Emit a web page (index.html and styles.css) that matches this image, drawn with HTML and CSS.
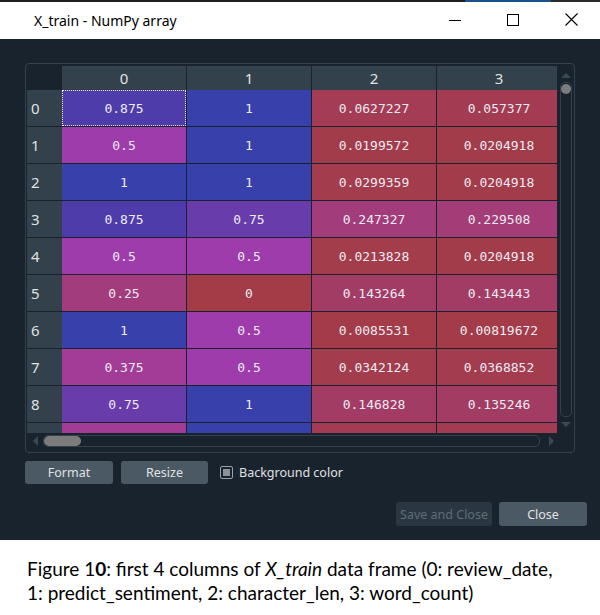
FILE: index.html
```html
<!DOCTYPE html>
<html>
<head>
<meta charset="utf-8">
<link rel="stylesheet" href="styles.css">
</head>
<body>
<div class="strip"></div>
<div class="titlebar">
  <span class="title">X_train - NumPy array</span>
  <div class="controls">
    <span class="ctl"><svg width="12" height="12" viewBox="0 0 12 12"><line x1="0" y1="6.5" x2="12" y2="6.5" stroke="#000" stroke-width="1"/></svg></span>
    <span class="ctl"><svg width="12" height="12" viewBox="0 0 12 12"><rect x="0.5" y="0.5" width="11" height="11" fill="none" stroke="#000" stroke-width="1"/></svg></span>
    <span class="ctl"><svg width="13" height="13" viewBox="0 0 13 13"><path d="M0.5 0.5 L12.5 12.5 M12.5 0.5 L0.5 12.5" stroke="#000" stroke-width="1.1"/></svg></span>
  </div>
</div>
<div class="dialog">
  <div class="frame">
    <div class="viewport">
      <div class="table">
        <div class="corner"></div>
        <div class="ch">0</div><div class="ch">1</div><div class="ch">2</div><div class="ch">3</div>

        <div class="rh">0</div>
        <div class="cell focus" style="--h:252.5">0.875</div>
        <div class="cell" style="--h:237.6">1</div>
        <div class="cell" style="--h:348.9">0.0627227</div>
        <div class="cell" style="--h:349.6">0.057377</div>

        <div class="rh">1</div>
        <div class="cell" style="--h:297">0.5</div>
        <div class="cell" style="--h:237.6">1</div>
        <div class="cell" style="--h:354">0.0199572</div>
        <div class="cell" style="--h:354">0.0204918</div>

        <div class="rh">2</div>
        <div class="cell" style="--h:237.6">1</div>
        <div class="cell" style="--h:237.6">1</div>
        <div class="cell" style="--h:352.8">0.0299359</div>
        <div class="cell" style="--h:354">0.0204918</div>

        <div class="rh">3</div>
        <div class="cell" style="--h:252.5">0.875</div>
        <div class="cell" style="--h:267.3">0.75</div>
        <div class="cell" style="--h:327">0.247327</div>
        <div class="cell" style="--h:329.1">0.229508</div>

        <div class="rh">4</div>
        <div class="cell" style="--h:297">0.5</div>
        <div class="cell" style="--h:297">0.5</div>
        <div class="cell" style="--h:353.9">0.0213828</div>
        <div class="cell" style="--h:354">0.0204918</div>

        <div class="rh">5</div>
        <div class="cell" style="--h:326.7">0.25</div>
        <div class="cell" style="--h:356.4">0</div>
        <div class="cell" style="--h:339.4">0.143264</div>
        <div class="cell" style="--h:339.4">0.143443</div>

        <div class="rh">6</div>
        <div class="cell" style="--h:237.6">1</div>
        <div class="cell" style="--h:297">0.5</div>
        <div class="cell" style="--h:355.4">0.0085531</div>
        <div class="cell" style="--h:355.4">0.00819672</div>

        <div class="rh">7</div>
        <div class="cell" style="--h:311.9">0.375</div>
        <div class="cell" style="--h:297">0.5</div>
        <div class="cell" style="--h:352.3">0.0342124</div>
        <div class="cell" style="--h:352">0.0368852</div>

        <div class="rh">8</div>
        <div class="cell" style="--h:267.3">0.75</div>
        <div class="cell" style="--h:237.6">1</div>
        <div class="cell" style="--h:339">0.146828</div>
        <div class="cell" style="--h:340.3">0.135246</div>

        <div class="rh"></div>
        <div class="cell" style="--h:311.9"></div>
        <div class="cell" style="--h:237.6"></div>
        <div class="cell" style="--h:350"></div>
        <div class="cell" style="--h:350"></div>
      </div>
    </div>
    <div class="vscroll">
      <svg class="arrow" width="10" height="5" viewBox="0 0 10 5"><path d="M0 5 L5 0 L10 5 Z" fill="#3a4853"/></svg>
      <div class="vtrack"><div class="vthumb"></div></div>
      <svg class="arrow" width="10" height="5" viewBox="0 0 10 5"><path d="M0 0 L5 5 L10 0 Z" fill="#3a4853"/></svg>
    </div>
    <div class="hscroll">
      <svg class="harrow" width="5" height="10" viewBox="0 0 5 10"><path d="M5 0 L0 5 L5 10 Z" fill="#3a4853"/></svg>
      <div class="htrack"><div class="hthumb"></div></div>
      <svg class="harrow" width="5" height="10" viewBox="0 0 5 10"><path d="M0 0 L5 5 L0 10 Z" fill="#3a4853"/></svg>
    </div>
  </div>
  <div class="tools">
    <button class="btn">Format</button>
    <button class="btn">Resize</button>
    <label class="check"><span class="box"><span class="fill"></span></span>Background color</label>
  </div>
  <div class="actions">
    <button class="btn wide disabled">Save and Close</button>
    <button class="btn">Close</button>
  </div>
</div>
<div class="caption">
  <div class="line">Figure 1<b>0</b>: first 4 columns of <i>X_train</i> data frame (0: review_date,</div>
  <div class="line">1: predict_sentiment, 2: character_len, 3: word_count)</div>
</div>
</body>
</html>
```

FILE: styles.css
```css
html, body {
  margin: 0;
  padding: 0;
  width: 600px;
  height: 615px;
  overflow: hidden;
  background: #ffffff;
}

.strip {
  height: 2px;
  background: linear-gradient(to right, #1e1e1e 0, #1e1e1e 465px, #17548f 465px, #17548f 551px, #2a2a2a 551px);
}

.titlebar {
  height: 37px;
  background: #ffffff;
  display: flex;
  align-items: center;
  justify-content: space-between;
}

.title {
  margin-left: 34px;
  margin-top: -1px;
  font-family: "Noto Sans", "Open Sans", sans-serif;
  font-size: 14px;
  color: #000;
}

.controls {
  display: flex;
  align-items: center;
  margin-top: -2px;
}

.ctl {
  width: 58px;
  display: flex;
  justify-content: center;
}

.ctl svg { display: block; }

.dialog {
  height: 501px;
  box-sizing: border-box;
  background: #19232d;
  padding: 24px 13px 0 25px;
  font-family: "Noto Sans", "Open Sans", sans-serif;
}

.frame {
  width: 550px;
  height: 390px;
  box-sizing: border-box;
  border: 1px solid #32414b;
  border-radius: 4px;
  display: grid;
  grid-template-columns: 531px 17px;
  grid-template-rows: 369px 19px;
}

.viewport {
  padding: 2px 0 0 1px;
  overflow: hidden;
}

.table {
  display: grid;
  grid-template-columns: 35px repeat(4, 125px);
  grid-template-rows: 24px;
  grid-auto-rows: 37px;
  width: 535px;
}

.corner {
  background: #19232d;
}

.ch {
  background: #32414b;
  color: #e0e1e3;
  font-size: 15px;
  display: flex;
  align-items: center;
  justify-content: center;
  border-right: 1px solid #19232d;
  box-sizing: border-box;
}

.rh {
  background: #32414b;
  color: #e0e1e3;
  font-size: 15px;
  display: flex;
  align-items: center;
  padding-left: 4px;
  border-bottom: 1px solid #19232d;
  box-sizing: border-box;
}

.cell {
  background: hsla(var(--h), 100%, 65%, 0.6);
  border-right: 1px solid #19232d;
  border-bottom: 1px solid #19232d;
  box-sizing: border-box;
  display: flex;
  align-items: center;
  justify-content: center;
  font-family: "DejaVu Sans Mono", monospace;
  font-size: 13px;
  color: #eceaf2;
  position: relative;
}

.focus::after {
  content: "";
  position: absolute;
  left: 0;
  top: 0;
  right: 0;
  bottom: 0;
  border: 1px dotted #e8e8e8;
}

.vscroll {
  grid-column: 2;
  grid-row: 1;
  display: flex;
  flex-direction: column;
  align-items: center;
  padding-top: 9px;
}

.arrow { display: block; }

.vtrack {
  margin-top: 4px;
  width: 12px;
  height: 335px;
  box-sizing: border-box;
  border: 1px solid #32414b;
  border-radius: 5px;
  margin-bottom: 5px;
  padding: 1px 0 0 0;
  display: flex;
  justify-content: center;
}

.vthumb {
  width: 10px;
  height: 10px;
  border-radius: 5px;
  background: #7c7c7c;
}

.hscroll {
  grid-column: 1 / span 2;
  grid-row: 2;
  display: flex;
  align-items: center;
  padding-left: 7px;
  padding-bottom: 4px;
}

.harrow { display: block; }

.htrack {
  margin-left: 5px;
  width: 497px;
  height: 12px;
  box-sizing: border-box;
  border: 1px solid #32414b;
  border-radius: 5px;
  display: flex;
  align-items: center;
  margin-right: 9px;
}

.hthumb {
  width: 37px;
  height: 10px;
  border-radius: 5px;
  background: #7c7c7c;
}

.tools {
  margin-top: 8px;
  display: flex;
  align-items: center;
  height: 23px;
}

.btn {
  height: 23px;
  width: 88px;
  margin: 0 8px 0 0;
  padding: 0;
  border: none;
  border-radius: 3px;
  background: #4b5965;
  color: #e0e1e3;
  font-family: "Noto Sans", "Open Sans", sans-serif;
  font-size: 12.5px;
}

.tools .btn + .btn { width: 87px; }

.check {
  margin-left: 4px;
  display: flex;
  align-items: center;
  color: #e0e1e3;
  font-size: 12.5px;
}

.box {
  width: 13px;
  height: 13px;
  box-sizing: border-box;
  border: 1px solid #9aa2a8;
  border-radius: 2px;
  margin-right: 6px;
  display: flex;
  align-items: center;
  justify-content: center;
}

.fill {
  width: 7px;
  height: 7px;
  background: #8e9296;
}

.actions {
  margin-top: 18px;
  display: flex;
  justify-content: flex-end;
  gap: 7px;
}

.actions .btn {
  margin: 0;
  height: 24px;
}

.actions .wide {
  width: 96px;
}

.disabled {
  background: #2a3742;
  color: #5f6c77;
}

.caption {
  padding: 17px 0 0 27px;
  font-family: "Lato", "Open Sans", sans-serif;
  font-size: 19px;
  line-height: 24px;
  color: #000;
}

.line { white-space: nowrap; }
.caption b { font-weight: 700; }
```
